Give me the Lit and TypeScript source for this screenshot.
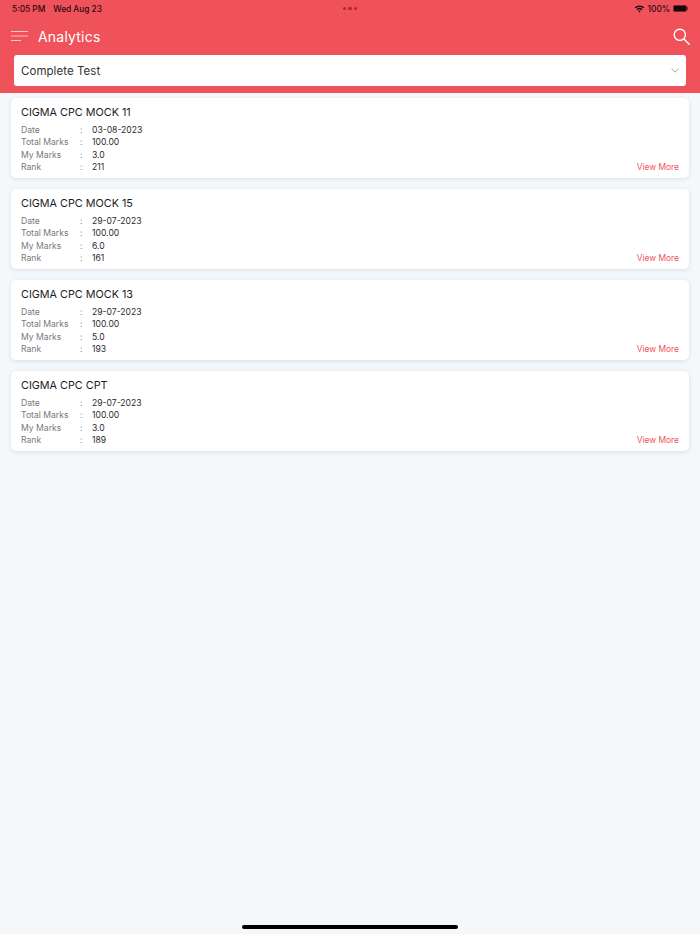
import {LitElement, html, css, svg} from "lit";
import {customElement} from "lit/decorators.js";

interface TestResult {
  name: string;
  date: string;
  total: string;
  marks: string;
  rank: string;
}

const RESULTS: TestResult[] = [
  {name: "CIGMA CPC MOCK 11", date: "03-08-2023", total: "100.00", marks: "3.0", rank: "211"},
  {name: "CIGMA CPC MOCK 15", date: "29-07-2023", total: "100.00", marks: "6.0", rank: "161"},
  {name: "CIGMA CPC MOCK 13", date: "29-07-2023", total: "100.00", marks: "5.0", rank: "193"},
  {name: "CIGMA CPC CPT", date: "29-07-2023", total: "100.00", marks: "3.0", rank: "189"},
];

const wifiIcon = svg`<path d="M1 4.2a10.4 10.4 0 0 1 14 0l-1.3 1.4a8.5 8.5 0 0 0-11.4 0z"/><path d="M3.6 7a6.7 6.7 0 0 1 8.8 0l-1.3 1.4a4.8 4.8 0 0 0-6.2 0z"/><path d="M6.2 9.8a2.9 2.9 0 0 1 3.6 0L8 11.8z"/>`;

@customElement("app-root")
export class AppRoot extends LitElement {
  static styles = css`
    :host {
      display: block;
      position: relative;
      height: 934px;
      overflow: hidden;
      background: #f4f8fb;
      font-family: "Inter", "Liberation Sans", sans-serif;
      color: #1c1c1e;
    }
    .header {
      background: #f0525b;
      height: 93px;
      box-sizing: border-box;
      display: flex;
      flex-direction: column;
    }
    .status {
      height: 17px;
      display: grid;
      grid-template-columns: 1fr auto 1fr;
      align-items: center;
      padding: 0 12px;
      font-size: 8.3px;
      font-weight: 500;
      color: #2a0a0d;
    }
    .status-left {
      display: flex;
      gap: 8px;
    }
    .dots {
      display: flex;
      gap: 2px;
    }
    .dots span {
      width: 3.5px;
      height: 3.5px;
      border-radius: 50%;
      background: #b5262f;
    }
    .status-right {
      display: flex;
      justify-content: flex-end;
      align-items: center;
      gap: 3px;
    }
    .wifi {
      width: 11px;
      height: 9px;
      fill: #1a0507;
    }
    .battery {
      display: flex;
      align-items: center;
    }
    .battery-body {
      width: 14px;
      height: 7px;
      box-sizing: border-box;
      border-radius: 2px;
      background: #12090a;
      border: 1px solid #7a2228;
    }
    .battery-tip {
      width: 1px;
      height: 3px;
      background: #7a2228;
    }
    .toolbar {
      height: 38px;
      display: flex;
      align-items: center;
      padding: 0 10px 0 11px;
      color: #fff;
    }
    .menu {
      width: 17px;
      height: 12px;
      flex: none;
      stroke: #fbc4c7;
      stroke-width: 1.2;
    }
    .title {
      margin-left: 10px;
      font-size: 14px;
      font-weight: 400;
      letter-spacing: 0.2px;
      flex: 1;
    }
    .search {
      width: 17px;
      height: 17px;
      fill: none;
      stroke: #fff;
      stroke-width: 1.4;
      stroke-linecap: round;
    }
    .select {
      margin: 0 14px;
      height: 31px;
      box-sizing: border-box;
      background: #fff;
      border-radius: 3px;
      display: flex;
      align-items: center;
      justify-content: space-between;
      padding: 0 7px;
      font-size: 11.5px;
      letter-spacing: 0.05px;
      color: #333;
    }
    .chevron {
      width: 8px;
      height: 5px;
      fill: none;
      stroke: #8a8a8a;
      stroke-width: 0.8;
    }
    .list {
      display: flex;
      flex-direction: column;
      gap: 11px;
      padding: 5px 11px 0;
    }
    .card {
      background: #fff;
      border-radius: 5px;
      box-shadow: 0 1px 4px rgba(60, 70, 90, 0.14);
      padding: 7px 10px 5px;
      height: 80px;
      box-sizing: border-box;
      position: relative;
    }
    .name {
      font-size: 10.8px;
      line-height: 15px;
      font-weight: 400;
      color: #1c1c1e;
    }
    .rows {
      margin-top: 3.8px;
      display: grid;
      grid-template-columns: 59px 12px 1fr;
      grid-auto-rows: 12.4px;
      align-items: center;
      font-size: 8.6px;
    }
    .label {
      color: #77777c;
    }
    .colon {
      color: #77777c;
    }
    .value {
      color: #2b2b2e;
    }
    .more {
      position: absolute;
      right: 10px;
      bottom: 6px;
      font-size: 8.4px;
      color: #f0525b;
    }
    .home {
      position: absolute;
      left: 242px;
      bottom: 5px;
      width: 216px;
      height: 4px;
      border-radius: 2px;
      background: #000;
    }
  `;

  renderCard(r: TestResult) {
    return html`
      <div class="card">
        <div class="name">${r.name}</div>
        <div class="rows">
          <span class="label">Date</span><span class="colon">:</span><span class="value">${r.date}</span>
          <span class="label">Total Marks</span><span class="colon">:</span><span class="value">${r.total}</span>
          <span class="label">My Marks</span><span class="colon">:</span><span class="value">${r.marks}</span>
          <span class="label">Rank</span><span class="colon">:</span><span class="value">${r.rank}</span>
        </div>
        <span class="more">View More</span>
      </div>
    `;
  }

  render() {
    return html`
      <div class="header">
        <div class="status">
          <div class="status-left"><span>5:05 PM</span><span>Wed Aug 23</span></div>
          <div class="dots"><span></span><span></span><span></span></div>
          <div class="status-right">
            <svg class="wifi" viewBox="0 0 16 12">${wifiIcon}</svg>
            <span>100%</span>
            <div class="battery"><div class="battery-body"></div><div class="battery-tip"></div></div>
          </div>
        </div>
        <div class="toolbar">
          <svg class="menu" viewBox="0 0 17 12">
            <path d="M0 1.5h17M0 6h17M0 10.5h10" />
          </svg>
          <span class="title">Analytics</span>
          <svg class="search" viewBox="0 0 17 17">
            <circle cx="6.8" cy="6.8" r="5.6" />
            <path d="M11 11l5.2 5.2" />
          </svg>
        </div>
        <div class="select">
          <span>Complete Test</span>
          <svg class="chevron" viewBox="0 0 8 5"><path d="M0.5 0.7L4 4.2 7.5 0.7" /></svg>
        </div>
      </div>
      <div class="list">${RESULTS.map((r) => this.renderCard(r))}</div>
      <div class="home"></div>
    `;
  }
}
